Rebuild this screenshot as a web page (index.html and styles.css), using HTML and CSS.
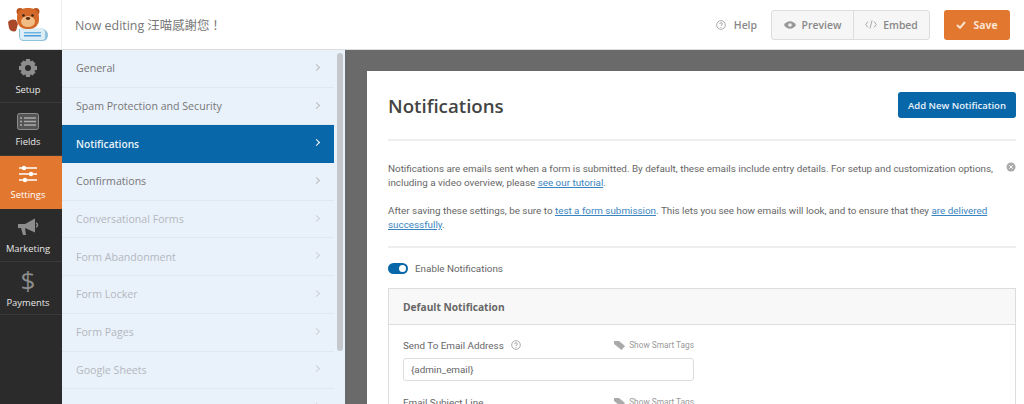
FILE: index.html
```html
<!DOCTYPE html>
<html lang="en">
<head>
    <meta charset="UTF-8">
    <meta name="viewport" content="width=device-width, initial-scale=1.0">
    <title>Form Builder Settings</title>
    <link rel="stylesheet" href="styles.css">
</head>
<body>
    <header class="topbar">
        <div class="logo-cell">
            <svg width="42" height="34" viewBox="0 0 42 34">
                <path d="M1 15c2-3 6-3 8-2l2 4-2 7c-3 1-6 0-7-3z" fill="#a9492a"/>
                <circle cx="13" cy="4.500" r="3.500" fill="#b9561f"/>
                <circle cx="29" cy="4.500" r="3.500" fill="#b9561f"/>
                <path d="M19 21h13c5 0 9 3 9 7 0 3-2 6-5 6H17c-3 0-5-2-5-5v-7z" fill="#8fc3dc"/>
                <path d="M13 21h20c3 0 5 2 5 5v4c0 2-1 3-3 3H17c-3 0-4-1-4-3z" fill="#dcedf5"/>
                <rect x="10" y="1" width="22" height="21" rx="9" fill="#d4692a"/>
                <ellipse cx="21" cy="14.500" rx="7" ry="5.500" fill="#f2bd85"/>
                <circle cx="16.500" cy="8.500" r="1.300" fill="#33261f"/>
                <circle cx="25.500" cy="8.500" r="1.300" fill="#33261f"/>
                <ellipse cx="21" cy="11.500" rx="2.200" ry="1.400" fill="#5a2d1a"/>
                <rect x="17" y="25" width="17" height="1.500" fill="#6cb3e0"/>
                <rect x="17" y="28" width="17" height="1.500" fill="#4a9bd8"/>
            </svg>
        </div>
        <div class="title">Now editing 汪喵感謝您！</div>
        <div class="top-actions">
            <a class="help">
                <svg class="help-icon" width="10" height="10" viewBox="0 0 10 10"><circle cx="5" cy="5" r="4.300" fill="none" stroke="#aaa"/><path d="M3.700 4c0-1.700 2.700-1.700 2.700 0 0 1-1.400 1-1.400 2M5 7v1" fill="none" stroke="#aaa"/></svg>
                Help
            </a>
            <div class="btn-group">
                <a class="group-btn preview">
                    <svg width="12" height="8" viewBox="0 0 12 8"><path d="M0 4c3-5 9-5 12 0-3 5-9 5-12 0z" fill="#999"/><circle cx="6" cy="4" r="1.800" fill="#f1f1f1"/></svg>
                    Preview
                </a>
                <a class="group-btn embed">
                    <svg width="12" height="9" viewBox="0 0 12 9"><path d="M3 1.500L.7 4.500 3 7.500M9 1.500l2.300 3-2.300 3M7 .5L5 8.500" fill="none" stroke="#aaa"/></svg>
                    Embed
                </a>
            </div>
            <a class="save-btn">
                <svg width="10" height="8" viewBox="0 0 10 8"><path d="M1 4l3 2.800L9 1" fill="none" stroke="#fbe3d0" stroke-width="2"/></svg>
                Save
            </a>
        </div>
    </header>

    <div class="workspace">
        <nav class="rail">
            <a class="rail-item">
                <svg width="20" height="20" viewBox="0 0 20 20"><path d="M8 1h4l.5 2.500 2-1 3 3-1.200 2 2.700.5v4l-2.700.5 1.200 2-3 3-2-1.200L12 19H8l-.5-2.700-2 1.200-3-3 1.200-2L1 12V8l2.700-.5-1.200-2 3-3 2 1z" fill="#8d8d8d"/><circle cx="10" cy="10" r="3" fill="#2b2b2b"/></svg>
                Setup
            </a>
            <a class="rail-item">
                <svg width="22" height="17" viewBox="0 0 22 17"><rect x=".5" y=".5" width="21" height="16" rx="2" fill="#555" stroke="#8d8d8d"/><path d="M3 5h2M7 5h12M3 8.500h2M7 8.500h12M3 12h2M7 12h12" stroke="#aaa" stroke-width="1.300"/></svg>
                Fields
            </a>
            <a class="rail-item active">
                <svg width="20" height="18" viewBox="0 0 20 18"><path d="M1 3h18M1 9h18M1 15h18" stroke="#fff" stroke-width="1.600"/><circle cx="6" cy="3" r="2.200" fill="#fff"/><circle cx="13" cy="9" r="2.200" fill="#fff"/><circle cx="7" cy="15" r="2.200" fill="#fff"/></svg>
                Settings
            </a>
            <a class="rail-item">
                <svg width="22" height="20" viewBox="0 0 22 20"><path d="M1 7h7l10-5.500v14L8 11H1z" fill="#8d8d8d"/><path d="M4 11h4l1 7H6z" fill="#8d8d8d"/><path d="M19 6c2 .5 2 3.500 0 4" fill="none" stroke="#8d8d8d" stroke-width="1.500"/></svg>
                Marketing
            </a>
            <a class="rail-item">
                <span class="dollar">$</span>
                Payments
            </a>
        </nav>

        <aside class="panel-list">
            <ul class="section-list">
                <li class="section">General</li>
                <li class="section">Spam Protection and Security</li>
                <li class="section current">Notifications</li>
                <li class="section">Confirmations</li>
                <li class="section muted">Conversational Forms</li>
                <li class="section muted">Form Abandonment</li>
                <li class="section muted">Form Locker</li>
                <li class="section muted">Form Pages</li>
                <li class="section muted">Google Sheets</li>
                <li class="section muted">Lead Forms</li>
            </ul>
            <div class="scroll-track"><div class="scroll-thumb"></div></div>
        </aside>

        <main class="stage">
            <section class="sheet">
                <div class="sheet-head">
                    <h1>Notifications</h1>
                    <a class="add-btn">Add New Notification</a>
                </div>

                <div class="intro">
                    <svg class="dismiss" width="10" height="10" viewBox="0 0 10 10"><circle cx="5" cy="5" r="4.500" fill="#aaa"/><path d="M3.300 3.300l3.400 3.400M6.700 3.300L3.300 6.700" stroke="#fff"/></svg>
                    <p>Notifications are emails sent when a form is submitted. By default, these emails include entry details. For setup and customization options, including a video overview, please <a href="#">see our tutorial</a>.</p>
                    <p>After saving these settings, be sure to <a href="#">test a form submission</a>. This lets you see how emails will look, and to ensure that they <a href="#">are delivered successfully</a>.</p>
                </div>

                <label class="toggle-row">
                    <span class="toggle"></span>
                    Enable Notifications
                </label>

                <div class="notif-box">
                    <div class="notif-title">Default Notification</div>
                    <div class="notif-body">
                        <div class="field-head">
                            <span class="field-label">Send To Email Address
                                <svg width="10" height="10" viewBox="0 0 10 10"><circle cx="5" cy="5" r="4.300" fill="none" stroke="#aaa"/><path d="M3.700 4c0-1.700 2.700-1.700 2.700 0 0 1-1.400 1-1.400 2M5 7v1" fill="none" stroke="#aaa"/></svg>
                            </span>
                            <span class="smart-tags">
                                <svg width="11" height="9" viewBox="0 0 11 9"><path d="M0 0h5l6 5-3.500 4L0 3z" fill="#aaa"/></svg>
                                Show Smart Tags
                            </span>
                        </div>
                        <div class="text-input">{admin_email}</div>
                        <div class="field-head">
                            <span class="field-label">Email Subject Line</span>
                            <span class="smart-tags">
                                <svg width="11" height="9" viewBox="0 0 11 9"><path d="M0 0h5l6 5-3.500 4L0 3z" fill="#aaa"/></svg>
                                Show Smart Tags
                            </span>
                        </div>
                    </div>
                </div>
            </section>
        </main>
    </div>
</body>
</html>
```

FILE: styles.css
```css
* {
    box-sizing: border-box;
    margin: 0;
    padding: 0;
}

body {
    width: 1024px;
    height: 404px;
    overflow: hidden;
    background: #fff;
    color: #666;
    font-family: 'Open Sans', 'Noto Sans CJK TC', sans-serif;
    font-size: 10.4px;
}

.topbar {
    height: 50px;
    display: flex;
    align-items: center;
    background: #fff;
    border-bottom: 1px solid #ddd;
}

.logo-cell {
    width: 62px;
    height: 100%;
    display: flex;
    align-items: center;
    padding: 0 0 2px 7px;
    border-right: 1px solid #eee;
}

.title {
    margin-left: 13px;
    font-size: 12.4px;
    color: #777;
}

.top-actions {
    margin-left: auto;
    display: flex;
    align-items: center;
    padding-right: 14px;
}

.help {
    display: flex;
    align-items: center;
    gap: 8px;
    color: #888;
    font-weight: 600;
    margin-right: 14px;
}

.btn-group {
    display: flex;
    height: 30px;
    width: 159px;
    border: 1px solid #ddd;
    border-radius: 3px;
    background: #f6f6f6;
    margin-right: 14px;
}

.group-btn {
    display: flex;
    align-items: center;
    justify-content: center;
    gap: 6px;
    color: #888;
    font-weight: 600;
}

.preview {
    width: 81px;
}

.embed {
    flex: 1;
    border-left: 1px solid #ddd;
}

.save-btn {
    width: 66px;
    height: 30px;
    display: flex;
    align-items: center;
    justify-content: center;
    gap: 7px;
    background: #e27730;
    border-radius: 3px;
    color: #fbe3d0;
    font-weight: 700;
}

.workspace {
    height: 354px;
    display: flex;
    overflow: hidden;
}

.rail {
    width: 62px;
    flex-shrink: 0;
    background: #2b2b2b;
}

.rail-item {
    height: 53px;
    display: flex;
    flex-direction: column;
    align-items: center;
    justify-content: center;
    gap: 5px;
    padding: 2px 6px 0 0;
    color: #e6e6e6;
    font-size: 9.400px;
    border-bottom: 1px solid #3a3a3a;
}

.rail-item.active {
    background: #e27730;
    color: #fff;
    border-bottom-color: #e27730;
}

.dollar {
    color: #8d8d8d;
    font-size: 26px;
    line-height: 22px;
}

.panel-list {
    width: 283px;
    flex-shrink: 0;
    display: flex;
    background: #e9f1fb;
}

.section-list {
    width: 272px;
    list-style: none;
}

.section {
    height: 37.700px;
    display: flex;
    align-items: center;
    justify-content: space-between;
    padding: 0 14px;
    color: #777;
    font-size: 10.600px;
    border-bottom: 1px solid #e0e7f0;
}

.section::after {
    content: "";
    width: 4px;
    height: 4px;
    margin: 0 1px 2px 0;
    border-top: 1px solid #bbb;
    border-right: 1px solid #bbb;
    transform: rotate(45deg);
}

.section.current {
    background: #0867a8;
    color: #e8f2fa;
    font-weight: 600;
    font-size: 10.200px;
    border-bottom-color: #0867a8;
}

.section.current::after {
    border-color: #fff;
}

.section.muted {
    color: #b4b8bd;
}

.section.muted::after {
    border-color: #ccd0d5;
}

.scroll-track {
    padding: 3px 0 0 3px;
}

.scroll-thumb {
    width: 6px;
    height: 298px;
    border-radius: 3px;
    background: #c4c8cd;
}

.stage {
    flex: 1;
    background: #6a6a6a;
    padding: 21px 0 0 22px;
}

.sheet {
    height: 100%;
    background: #fff;
    padding: 0 8px 0 21px;
    font-family: Roboto, 'Open Sans', sans-serif;
    font-size: 9.850px;
}

.sheet-head {
    height: 70px;
    display: flex;
    align-items: center;
    justify-content: space-between;
    border-bottom: 2px solid #eee;
    font-family: 'Open Sans', sans-serif;
}

h1 {
    font-size: 18.700px;
    font-weight: 600;
    color: #444;
}

.add-btn {
    width: 118px;
    height: 26px;
    display: flex;
    align-items: center;
    justify-content: center;
    background: #0867a8;
    border-radius: 3px;
    color: #e8f2fa;
    font-size: 9.500px;
    font-weight: 600;
}

.intro {
    position: relative;
    padding: 21px 20px 14px 0;
    line-height: 14px;
    border-bottom: 2px solid #eee;
}

.intro p + p {
    margin-top: 14px;
}

.intro a {
    color: #3a85c0;
}

.dismiss {
    position: absolute;
    top: 21px;
    right: 0;
}

.toggle-row {
    height: 40px;
    display: flex;
    align-items: center;
    gap: 7px;
}

.toggle {
    position: relative;
    width: 20px;
    height: 11px;
    border-radius: 6px;
    background: #0867a8;
}

.toggle::after {
    content: "";
    position: absolute;
    top: 2px;
    right: 2px;
    width: 7px;
    height: 7px;
    border-radius: 50%;
    background: #fff;
}

.notif-box {
    border: 1px solid #ddd;
}

.notif-title {
    height: 36px;
    display: flex;
    align-items: center;
    padding-left: 14px;
    background: #f8f8f8;
    border-bottom: 1px solid #ddd;
    font-family: 'Open Sans', sans-serif;
    font-size: 10.200px;
    font-weight: 700;
    color: #666;
}

.notif-body {
    width: 305px;
    padding: 13px 0 0 14px;
}

.field-head {
    display: flex;
    align-items: center;
    justify-content: space-between;
    height: 14px;
}

.field-label {
    display: flex;
    align-items: center;
    gap: 7px;
}

.smart-tags {
    display: flex;
    align-items: center;
    gap: 4px;
    color: #999;
    font-size: 8.300px;
}

.text-input {
    height: 23px;
    margin: 6px 0 14px;
    padding-left: 7px;
    display: flex;
    align-items: center;
    border: 1px solid #ddd;
    border-radius: 3px;
}
```
